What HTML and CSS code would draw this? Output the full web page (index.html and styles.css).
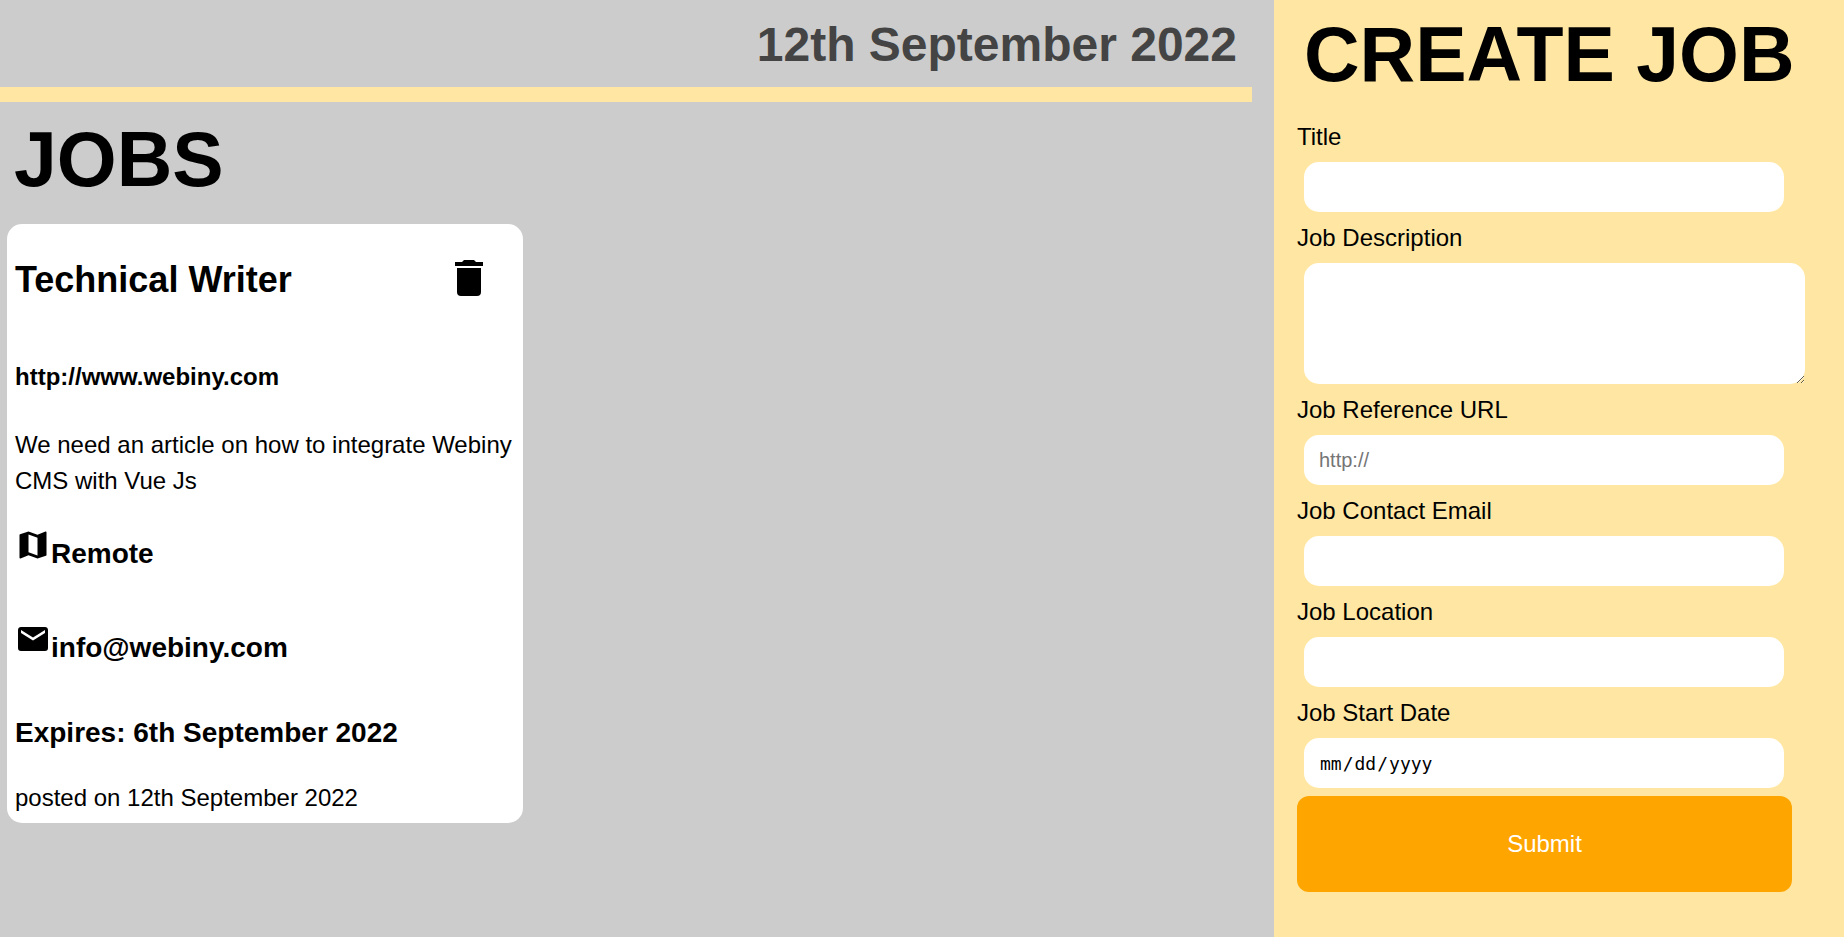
FILE: index.html
```html
<!DOCTYPE html>
<html lang="en">
<head>
<meta charset="utf-8">
<title>Jobs</title>
<link rel="stylesheet" href="styles.css">
</head>
<body>
<div class="layout">
  <main class="board">
    <header class="board-header">
      <h2 class="today">12th September 2022</h2>
    </header>
    <h1 class="heading board-heading">JOBS</h1>
    <div class="job-list">
      <article class="job">
        <div class="job-top">
          <h2 class="job-title">Technical Writer</h2>
          <button class="job-delete" type="button" aria-label="Delete job">
            <svg class="icon-large" viewBox="0 0 24 24"><path d="M19 4h-3.5l-1-1h-5l-1 1H5v2h14V4zM6 19a2 2 0 0 0 2 2h8a2 2 0 0 0 2-2V7H6v12z"/></svg>
          </button>
        </div>
        <a class="job-link" href="http://www.webiny.com">http://www.webiny.com</a>
        <p class="job-text">We need an article on how to integrate Webiny CMS with Vue Js</p>
        <div class="job-facts">
          <h3 class="job-fact">
            <svg class="icon" viewBox="0 0 24 24"><path d="M15 19l-6-2.11V5l6 2.11M20.5 3h-.16L15 5.1 9 3 3.36 4.9c-.21.07-.36.25-.36.48V20.5a.5.5 0 0 0 .5.5c.05 0 .11 0 .16-.03L9 18.9l6 2.1 5.64-1.9c.21-.1.36-.25.36-.48V3.5a.5.5 0 0 0-.5-.5z"/></svg>
            <span>Remote</span>
          </h3>
          <h3 class="job-fact">
            <svg class="icon" viewBox="0 0 24 24"><path d="M20 8l-8 5-8-5V6l8 5 8-5m0-2H4c-1.11 0-2 .89-2 2v12a2 2 0 0 0 2 2h16a2 2 0 0 0 2-2V6c0-1.11-.9-2-2-2z"/></svg>
            <span>info@webiny.com</span>
          </h3>
        </div>
        <h3 class="job-expiry">Expires: 6th September 2022</h3>
        <p class="job-posted">posted on 12th September 2022</p>
      </article>
    </div>
  </main>
  <aside class="sidebar">
    <h1 class="heading form-heading">CREATE JOB</h1>
    <form class="job-form">
      <label for="title">Title</label>
      <input class="field" id="title" type="text">
      <label for="description">Job Description</label>
      <textarea class="field field-area" id="description"></textarea>
      <label for="url">Job Reference URL</label>
      <input class="field" id="url" type="url" placeholder="http://">
      <label for="email">Job Contact Email</label>
      <input class="field" id="email" type="email">
      <label for="location">Job Location</label>
      <input class="field" id="location" type="text">
      <label for="date">Job Start Date</label>
      <input class="field field-date" id="date" type="date">
      <button class="submit" type="submit">Submit</button>
    </form>
  </aside>
</div>
</body>
</html>
```
FILE: styles.css
```css
* {
  box-sizing: border-box;
}

body {
  margin: 0;
  background: #ccc;
  color: #000;
  font-family: "Liberation Sans", Arial, sans-serif;
  font-size: 24px;
  line-height: 36px;
}

h1,
h2,
h3,
p {
  margin: 0;
}

.layout {
  display: grid;
  grid-template-columns: minmax(0, 1274fr) minmax(0, 570fr);
  min-height: 100vh;
}

.board-header {
  margin-right: 22px;
  padding: 9px 15px 6px;
  border-bottom: 15px solid #ffe7a3;
}

.today {
  color: #444;
  font-size: 48px;
  line-height: 72px;
  text-align: right;
}

.heading {
  font-size: 77px;
  line-height: 88px;
}

.board-heading {
  padding: 13px 14px 21px;
}

.job-list {
  display: grid;
  grid-template-columns: repeat(auto-fill, 516px);
  gap: 16px;
  padding: 0 7px;
}

.job {
  padding: 29px 8px 7px;
  border-radius: 15px;
  background: #fff;
}

.job-top {
  display: flex;
  align-items: flex-start;
  justify-content: space-between;
  margin-bottom: 52px;
  padding-right: 22px;
}

.job-title {
  font-size: 36px;
  line-height: 54px;
}

.job-delete {
  display: flex;
  padding: 1px 0;
  border: 0;
  background: none;
  cursor: pointer;
}

.icon-large {
  width: 48px;
  height: 48px;
}

.icon {
  flex: none;
  width: 36px;
  height: 36px;
}

.job-link {
  display: block;
  color: inherit;
  font-weight: bold;
  text-decoration: none;
}

.job-text {
  margin: 32px 0 28px;
}

.job-facts {
  display: flex;
  flex-direction: column;
  gap: 46px;
  margin-bottom: 43px;
}

.job-fact,
.job-expiry {
  font-size: 28px;
  line-height: 42px;
}

.job-fact {
  display: flex;
  align-items: baseline;
}

.job-expiry {
  margin-bottom: 26px;
}

.sidebar {
  padding: 10px 0 44px 23px;
  background: #ffe7a3;
}

.form-heading {
  margin: 0 52px 21px 0;
  padding-left: 7px;
  text-align: center;
  white-space: nowrap;
}

.job-form {
  display: flex;
  flex-direction: column;
  margin-right: 52px;
}

.field {
  width: calc(100% - 15px);
  height: 50px;
  margin: 7px 7px 8px;
  padding: 0 15px;
  border: 0;
  border-radius: 15px;
  background: #fff;
  font-family: inherit;
  font-size: 20px;
}

.field-area {
  width: calc(100% + 6px);
  height: 121px;
  padding: 15px;
  resize: both;
}

.field-date {
  font-family: "DejaVu Sans Mono", monospace;
  font-size: 18px;
}

.field-date::-webkit-calendar-picker-indicator {
  display: none;
}

.submit {
  height: 96px;
  border: 0;
  border-radius: 12px;
  background: orange;
  color: #fff;
  font-family: inherit;
  font-size: 24px;
  cursor: pointer;
}
```
